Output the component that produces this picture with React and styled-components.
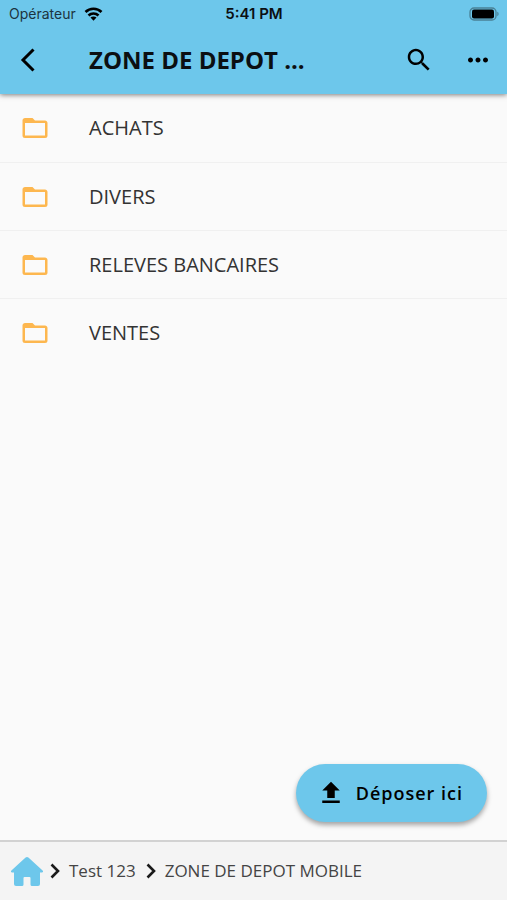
import styled, { createGlobalStyle } from "styled-components";

const GlobalStyle = createGlobalStyle`
  * {
    box-sizing: border-box;
  }

  body {
    margin: 0;
    background-color: #fafafa;
    font-family: "Open Sans", sans-serif;
    color: #333;
  }
`;

const Screen = styled.div`
  display: flex;
  flex-direction: column;
  min-height: 100vh;
`;

const Header = styled.header`
  background-color: #6dc7eb;
  color: #0b0f12;
  box-shadow: 0 1px 5px rgba(0, 0, 0, 0.5);
`;

const StatusBar = styled.div`
  display: grid;
  grid-template-columns: 1fr auto 1fr;
  align-items: center;
  height: 28px;
  padding: 0 8px 0 9px;
  font-family: Inter, sans-serif;
  font-size: 14px;
  line-height: 18px;
`;

const Carrier = styled.div`
  display: flex;
  align-items: center;
  gap: 8px;
  color: #1c3440;
`;

const Time = styled.div`
  font-size: 15px;
  font-weight: 600;
`;

const Battery = styled.svg`
  justify-self: end;
`;

const Toolbar = styled.div`
  display: flex;
  align-items: center;
  height: 66px;
  padding: 0 14px 2px;
`;

const Title = styled.h1`
  flex: 1;
  margin: 0 0 0 47px;
  font-size: 24px;
  font-weight: 700;
  line-height: 32px;
  white-space: nowrap;
`;

const IconButton = styled.button`
  display: flex;
  padding: 0;
  border: none;
  background: none;
  color: #000;
  cursor: pointer;
  margin-left: ${(props) => props.$gap || 0}px;
`;

const FolderList = styled.ul`
  flex: 1;
  margin: 0;
  padding: 0;
  list-style: none;
`;

const FolderRow = styled.li`
  height: 68px;

  & + & {
    border-top: 1px solid #f0f0f0;
  }
`;

const FolderLink = styled.a`
  display: flex;
  align-items: center;
  gap: 39px;
  height: 68px;
  padding: 0 20px;
  color: #333;
  font-size: 20px;
  line-height: 28px;
  text-decoration: none;
`;

const BottomArea = styled.div`
  position: sticky;
  bottom: 0;
`;

const DropButton = styled.button`
  display: flex;
  align-items: center;
  gap: 10px;
  height: 58px;
  margin: 0 20px 18px auto;
  padding: 0 24px 0 20px;
  border: none;
  border-radius: 29px;
  background-color: #6dc7eb;
  box-shadow: 0 3px 5px rgba(0, 0, 0, 0.35);
  color: #000;
  font-family: inherit;
  font-size: 18px;
  font-weight: 600;
  letter-spacing: 1px;
  cursor: pointer;
`;

const Breadcrumb = styled.nav`
  display: flex;
  align-items: center;
  height: 60px;
  padding: 0 10px;
  border-top: 2px solid #d2d2d2;
  background-color: #f4f4f4;
`;

const Crumb = styled.a`
  display: flex;
  color: #444;
  font-size: 17px;
  line-height: 24px;
  text-decoration: none;
  white-space: nowrap;
`;

const Separator = styled.svg`
  flex: none;
  margin: 0 9px 0 ${(props) => props.$before}px;
`;

const folders = ["ACHATS", "DIVERS", "RELEVES BANCAIRES", "VENTES"];

const Icon = ({ path, color }) => (
  <svg width="30" height="30" viewBox="0 0 24 24" fill={color || "currentColor"} aria-hidden="true">
    <path d={path} />
  </svg>
);

const searchPath =
  "M15.5 14h-.79l-.28-.27C15.41 12.59 16 11.11 16 9.5 16 5.91 13.09 3 9.5 3S3 5.91 3 9.5 5.91 16 9.5 16c1.61 0 3.09-.59 4.23-1.57l.27.28v.79l5 4.99L20.49 19l-4.99-5zm-6 0C7.01 14 5 11.99 5 9.5S7.01 5 9.5 5 14 7.01 14 9.5 11.99 14 9.5 14z";
const morePath =
  "M6 10c-1.1 0-2 .9-2 2s.9 2 2 2 2-.9 2-2-.9-2-2-2zm12 0c-1.1 0-2 .9-2 2s.9 2 2 2 2-.9 2-2-.9-2-2-2zm-6 0c-1.1 0-2 .9-2 2s.9 2 2 2 2-.9 2-2-.9-2-2-2z";
const folderPath =
  "M20 18H4V8h16m0-2h-8l-2-2H4c-1.11 0-2 .89-2 2v12a2 2 0 0 0 2 2h16a2 2 0 0 0 2-2V8c0-1.11-.9-2-2-2z";
const uploadPath = "M9 16h6v-6h4l-7-7-7 7h4zm-4 2h14v2H5z";

const Chevron = ({ before }) => (
  <Separator $before={before} width="10" height="16" viewBox="0 0 10 16" fill="none" stroke="#1a1a1a" strokeWidth="2.6" aria-hidden="true">
    <path d="M1.5 1.5L8 8l-6.5 6.5" />
  </Separator>
);

const App = () => {
  return (
    <>
      <GlobalStyle />
      <Screen>
        <Header>
          <StatusBar>
            <Carrier>
              Opérateur
              <svg width="19" height="14" viewBox="0 0 18 14" fill="none" stroke="#000" strokeWidth="2.6" aria-hidden="true">
                <path d="M1 5C5.4.7 12.6.7 17 5" />
                <path d="M4 8.500c2.800-2.700 7.200-2.700 10 0" />
                <path d="M9 13.800l-3-3.200c1.600-1.500 4.400-1.500 6 0z" fill="#000" stroke="none" />
              </svg>
            </Carrier>
            <Time>5:41 PM</Time>
            <Battery width="30" height="14" viewBox="0 0 30 14" aria-hidden="true">
              <rect x="1" y="1" width="26" height="12" rx="4" fill="none" stroke="#4a8196" strokeWidth="1.3" />
              <rect x="3" y="2.500" width="22" height="9" rx="2" fill="#000" />
              <path d="M28.3 4.8c1.7.6 1.7 3.8 0 4.4z" fill="#4a8196" />
            </Battery>
          </StatusBar>
          <Toolbar>
            <IconButton aria-label="Retour">
              <svg width="28" height="30" viewBox="0 0 28 30" fill="none" stroke="currentColor" strokeWidth="3" aria-hidden="true">
                <path d="M19.500 4.500L9 15l10.500 10.500" />
              </svg>
            </IconButton>
            <Title>ZONE DE DEPOT ...</Title>
            <IconButton aria-label="Rechercher">
              <Icon path={searchPath} />
            </IconButton>
            <IconButton aria-label="Plus d'options" $gap={29}>
              <Icon path={morePath} />
            </IconButton>
          </Toolbar>
        </Header>

        <FolderList>
          {folders.map((name) => (
            <FolderRow key={name}>
              <FolderLink href="#">
                <Icon path={folderPath} color="#fdb74f" />
                {name}
              </FolderLink>
            </FolderRow>
          ))}
        </FolderList>

        <BottomArea>
          <DropButton>
            <Icon path={uploadPath} />
            Déposer ici
          </DropButton>
          <Breadcrumb>
            <Crumb href="#" aria-label="Accueil">
              <svg width="34" height="32" viewBox="0 0 34 32" fill="#6dc7eb" aria-hidden="true">
                <path d="M15.6 2.5q1.4-1 2.8 0L32.6 15.400q1.300 1.600-.8 2H30v11.600q0 2-2 2h-6q-1.500 0-1.500-1.500V23q0-1-1-1h-5q-1 0-1 1v6.500q0 1.500-1.500 1.500H6q-2 0-2-2V17.400H2.200q-2.100-.4-.8-2z" />
              </svg>
            </Crumb>
            <Chevron before={6} />
            <Crumb href="#">Test 123</Crumb>
            <Chevron before={10} />
            <Crumb href="#" aria-current="page">ZONE DE DEPOT MOBILE</Crumb>
          </Breadcrumb>
        </BottomArea>
      </Screen>
    </>
  );
};

export default App;
